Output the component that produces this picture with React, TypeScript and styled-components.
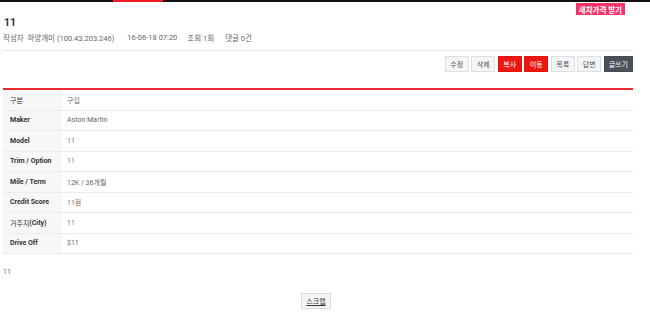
import React from "react";
import styled, { createGlobalStyle } from "styled-components";

const Global = createGlobalStyle`
  html, body { margin: 0; padding: 0; background: #fff; }
  body { font-family: Roboto, "Noto Sans CJK KR", sans-serif; color: #333; }
`;

const TopBar = styled.div`
  display: flex;
  height: 2px;
  background: #111;
`;
const TopGap = styled.div`width: 113px;`;
const TopActive = styled.div`width: 50px; background: #ee1c25;`;

const Page = styled.div`
  padding: 0 17px 0 3px;
`;

const BadgeRow = styled.div`
  display: flex;
  justify-content: flex-end;
  padding: 1px 8px 0 0;
`;
const Badge = styled.span`
  display: inline-flex;
  align-items: center;
  height: 12px;
  padding: 0 3px;
  background: #f7336b;
  color: #fff;
  font-size: 7.5px;
  font-weight: 700;
`;

const Title = styled.h1`
  margin: 1px 0 0;
  padding: 0 0 0 1px;
  font-size: 10.5px;
  font-weight: 700;
  color: #333;
  line-height: 13px;
`;

const Meta = styled.div`
  display: flex;
  align-items: center;
  height: 15px;
  margin-top: 1px;
  font-size: 7.5px;
  color: #666;
  border-bottom: 1px solid #e4e4e4;
  padding-bottom: 5px;
`;
const MetaItem = styled.span<{ $gap?: number }>`
  margin-left: ${(p) => p.$gap ?? 0}px;
  white-space: pre;
`;

const Toolbar = styled.div`
  display: flex;
  justify-content: flex-end;
  gap: 2.5px;
  margin-top: 5px;
`;
const Btn = styled.button<{ $kind?: "red" | "dark" }>`
  height: 16px;
  min-width: 24px;
  padding: 0 4px;
  border: 1px solid
    ${(p) => (p.$kind === "red" ? "#e3130f" : p.$kind === "dark" ? "#474c54" : "#dcdfe3")};
  background: ${(p) => (p.$kind === "red" ? "#ee1610" : p.$kind === "dark" ? "#4b5059" : "#f4f5f6")};
  color: ${(p) => (p.$kind ? "#fff" : "#555")};
  font-family: "Noto Sans CJK KR", sans-serif;
  font-size: 7px;
  line-height: 14px;
  cursor: pointer;
`;

const Table = styled.div`
  margin-top: 16px;
  border-top: 2px solid #ea2a30;
`;
const Row = styled.div`
  display: grid;
  grid-template-columns: 59px 1fr;
  height: 20.5px;
  border-bottom: 1px solid #ebebeb;
  box-sizing: border-box;
`;
const Label = styled.div`
  display: flex;
  align-items: center;
  padding-left: 7px;
  background: #f7f7f7;
  font-size: 7px;
  font-weight: 700;
  color: #333;
`;
const Ko = styled.span`font-weight: 400;`;
const Value = styled.div<{ $tone?: "warm" }>`
  display: flex;
  align-items: center;
  padding-left: 5px;
  font-size: 7px;
  color: ${(p) => (p.$tone === "warm" ? "#8d6e66" : "#666")};
`;

const Body = styled.div`
  margin-top: 14px;
  font-size: 7px;
  color: #666;
`;

const ScrapRow = styled.div`
  display: flex;
  justify-content: center;
  margin-top: 17px;
  padding-right: 4px;
`;
const ScrapBtn = styled.button`
  height: 16px;
  padding: 0 4px;
  border: 1px solid #dcdcdc;
  background: #f5f5f5;
  color: #333;
  font-family: "Noto Sans CJK KR", sans-serif;
  font-size: 7px;
  text-decoration: underline;
  cursor: pointer;
`;

const rows: { label: React.ReactNode; value: string; warm?: boolean }[] = [
  { label: <Ko>구분</Ko>, value: "구입" },
  { label: "Maker", value: "Aston Martin" },
  { label: "Model", value: "11", warm: true },
  { label: "Trim / Option", value: "11", warm: true },
  { label: "Mile / Term", value: "12K / 36개월" },
  { label: "Credit Score", value: "11점", warm: true },
  { label: <><Ko>거주지</Ko>(City)</>, value: "11", warm: true },
  { label: "Drive Off", value: "$11" },
];

export default function App() {
  return (
    <>
      <Global />
      <TopBar>
        <TopGap />
        <TopActive />
      </TopBar>
      <Page>
        <BadgeRow>
          <Badge>새차가격 받기</Badge>
        </BadgeRow>
        <Title>11</Title>
        <Meta>
          <MetaItem>작성자  하양개미 (100.43.203.246)</MetaItem>
          <MetaItem $gap={13}>16-06-18 07:20</MetaItem>
          <MetaItem $gap={10}>조회 1회</MetaItem>
          <MetaItem $gap={11}>댓글 0건</MetaItem>
        </Meta>
        <Toolbar>
          <Btn>수정</Btn>
          <Btn>삭제</Btn>
          <Btn $kind="red">복사</Btn>
          <Btn $kind="red">이동</Btn>
          <Btn>목록</Btn>
          <Btn>답변</Btn>
          <Btn $kind="dark">글쓰기</Btn>
        </Toolbar>
        <Table>
          {rows.map((r, i) => (
            <Row key={i}>
              <Label>{r.label}</Label>
              <Value $tone={r.warm ? "warm" : undefined}>{r.value}</Value>
            </Row>
          ))}
        </Table>
        <Body>11</Body>
        <ScrapRow>
          <ScrapBtn>스크랩</ScrapBtn>
        </ScrapRow>
      </Page>
    </>
  );
}
